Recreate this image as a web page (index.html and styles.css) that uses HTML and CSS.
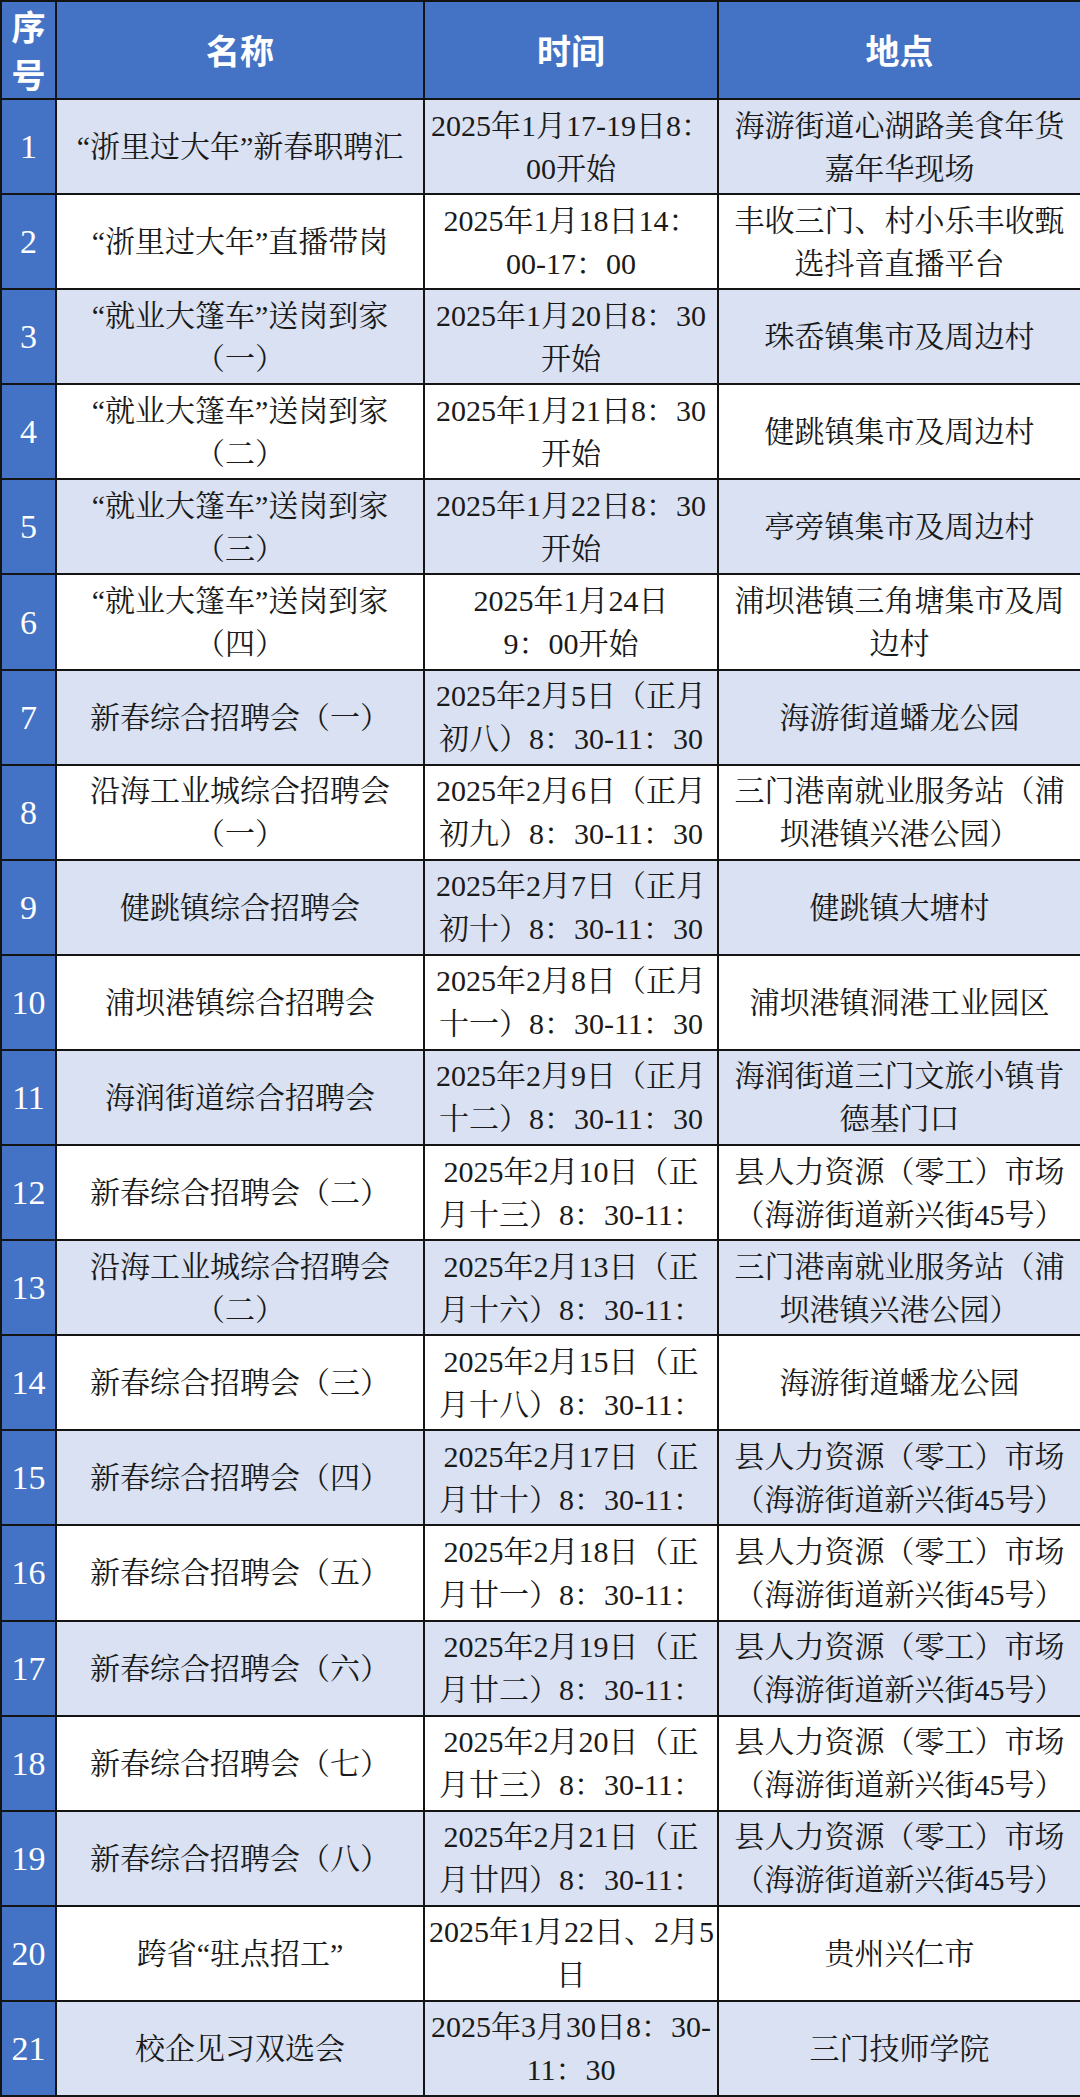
FILE: index.html
```html
<!DOCTYPE html>
<html lang="zh-CN">
<head>
<meta charset="utf-8">
<title>活动安排</title>
<link rel="stylesheet" href="styles.css">
</head>
<body>
<table class="sched">
  <colgroup>
    <col class="c-no"><col class="c-name"><col class="c-time"><col class="c-place">
  </colgroup>
  <thead>
    <tr class="head">
      <th class="no-h">序号</th>
      <th>名称</th>
      <th>时间</th>
      <th>地点</th>
    </tr>
  </thead>
  <tbody>
    <tr class="alt"><td class="no">1</td><td>“浙里过大年”新春职聘汇</td><td>2025年1月17-19日8：<br>00开始</td><td>海游街道心湖路美食年货<br>嘉年华现场</td></tr>
    <tr><td class="no">2</td><td>“浙里过大年”直播带岗</td><td>2025年1月18日14：<br>00-17：00</td><td>丰收三门、村小乐丰收甄<br>选抖音直播平台</td></tr>
    <tr class="alt"><td class="no">3</td><td>“就业大篷车”送岗到家<br>（一）</td><td>2025年1月20日8：30<br>开始</td><td>珠岙镇集市及周边村</td></tr>
    <tr><td class="no">4</td><td>“就业大篷车”送岗到家<br>（二）</td><td>2025年1月21日8：30<br>开始</td><td>健跳镇集市及周边村</td></tr>
    <tr class="alt"><td class="no">5</td><td>“就业大篷车”送岗到家<br>（三）</td><td>2025年1月22日8：30<br>开始</td><td>亭旁镇集市及周边村</td></tr>
    <tr><td class="no">6</td><td>“就业大篷车”送岗到家<br>（四）</td><td>2025年1月24日<br>9：00开始</td><td>浦坝港镇三角塘集市及周<br>边村</td></tr>
    <tr class="alt"><td class="no">7</td><td>新春综合招聘会（一）</td><td>2025年2月5日（正月<br>初八）8：30-11：30</td><td>海游街道蟠龙公园</td></tr>
    <tr><td class="no">8</td><td>沿海工业城综合招聘会<br>（一）</td><td>2025年2月6日（正月<br>初九）8：30-11：30</td><td>三门港南就业服务站（浦<br>坝港镇兴港公园）</td></tr>
    <tr class="alt"><td class="no">9</td><td>健跳镇综合招聘会</td><td>2025年2月7日（正月<br>初十）8：30-11：30</td><td>健跳镇大塘村</td></tr>
    <tr><td class="no">10</td><td>浦坝港镇综合招聘会</td><td>2025年2月8日（正月<br>十一）8：30-11：30</td><td>浦坝港镇洞港工业园区</td></tr>
    <tr class="alt"><td class="no">11</td><td>海润街道综合招聘会</td><td>2025年2月9日（正月<br>十二）8：30-11：30</td><td>海润街道三门文旅小镇肯<br>德基门口</td></tr>
    <tr><td class="no">12</td><td>新春综合招聘会（二）</td><td>2025年2月10日（正<br>月十三）8：30-11：</td><td>县人力资源（零工）市场<br>（海游街道新兴街45号）</td></tr>
    <tr class="alt"><td class="no">13</td><td>沿海工业城综合招聘会<br>（二）</td><td>2025年2月13日（正<br>月十六）8：30-11：</td><td>三门港南就业服务站（浦<br>坝港镇兴港公园）</td></tr>
    <tr><td class="no">14</td><td>新春综合招聘会（三）</td><td>2025年2月15日（正<br>月十八）8：30-11：</td><td>海游街道蟠龙公园</td></tr>
    <tr class="alt"><td class="no">15</td><td>新春综合招聘会（四）</td><td>2025年2月17日（正<br>月廿十）8：30-11：</td><td>县人力资源（零工）市场<br>（海游街道新兴街45号）</td></tr>
    <tr><td class="no">16</td><td>新春综合招聘会（五）</td><td>2025年2月18日（正<br>月廿一）8：30-11：</td><td>县人力资源（零工）市场<br>（海游街道新兴街45号）</td></tr>
    <tr class="alt"><td class="no">17</td><td>新春综合招聘会（六）</td><td>2025年2月19日（正<br>月廿二）8：30-11：</td><td>县人力资源（零工）市场<br>（海游街道新兴街45号）</td></tr>
    <tr><td class="no">18</td><td>新春综合招聘会（七）</td><td>2025年2月20日（正<br>月廿三）8：30-11：</td><td>县人力资源（零工）市场<br>（海游街道新兴街45号）</td></tr>
    <tr class="alt"><td class="no">19</td><td>新春综合招聘会（八）</td><td>2025年2月21日（正<br>月廿四）8：30-11：</td><td>县人力资源（零工）市场<br>（海游街道新兴街45号）</td></tr>
    <tr><td class="no">20</td><td>跨省“驻点招工”</td><td>2025年1月22日、2月5<br>日</td><td>贵州兴仁市</td></tr>
    <tr class="alt"><td class="no">21</td><td>校企见习双选会</td><td>2025年3月30日8：30-<br>11：30</td><td>三门技师学院</td></tr>
  </tbody>
</table>
</body>
</html>
```

FILE: styles.css
```css
html, body {
  margin: 0;
  padding: 0;
  background: #ffffff;
}

.sched {
  width: 1080px;
  height: 2097px;
  table-layout: fixed;
  border-collapse: collapse;
  font-family: "Liberation Serif", "Noto Serif CJK SC", "Noto Sans CJK SC", serif;
  color: #1a1a1a;
}

.c-no { width: 55px; }
.c-name { width: 368px; }
.c-time { width: 294px; }
.c-place { width: 363px; }

.sched th,
.sched td {
  border: 2px solid #141414;
  text-align: center;
  vertical-align: middle;
  padding: 0 4px;
  white-space: nowrap;
  overflow: hidden;
}

.sched td {
  font-size: 30px;
  line-height: 43px;
}

.head {
  height: 96px;
}

.head th {
  background: #4472c4;
  color: #ffffff;
  font-family: "Noto Sans CJK SC", sans-serif;
  font-weight: 700;
  font-size: 34px;
  line-height: 48px;
}

.head .no-h {
  white-space: normal;
  padding: 0;
}

.sched tbody tr {
  height: 95px;
  background: #ffffff;
}

.sched tbody tr.alt {
  background: #d9e1f2;
}

.sched td.no {
  background: #4472c4;
  color: #ffffff;
  font-size: 34px;
  padding: 0;
}
```
